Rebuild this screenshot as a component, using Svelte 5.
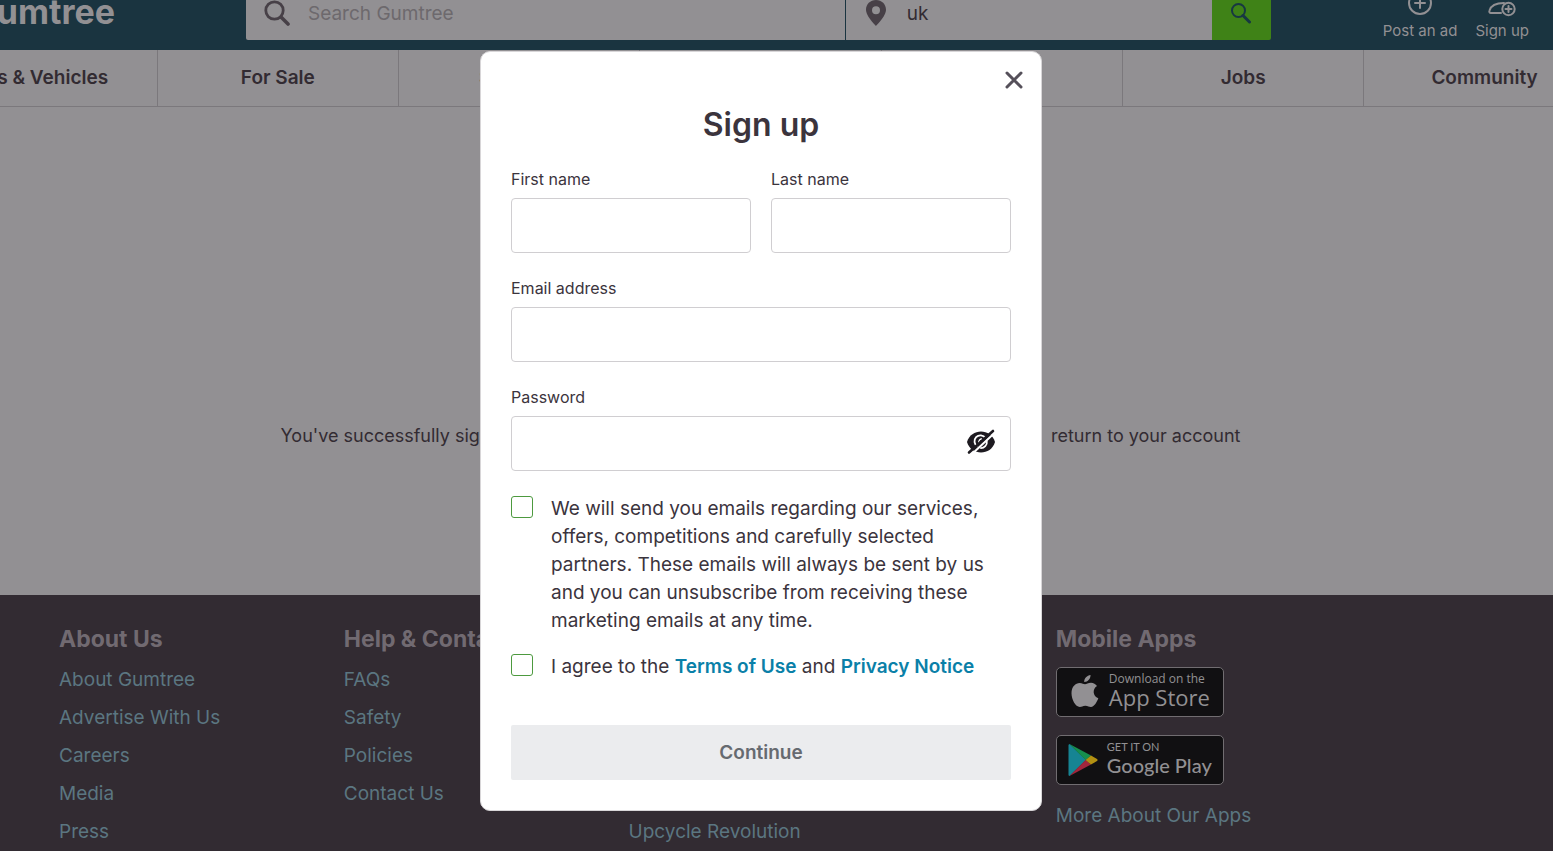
<script lang="ts">
  const categories = ["Cars & Vehicles", "For Sale", "Services", "Property", "Pets", "Jobs", "Community"];

  const footerColumns = [
    {
      title: "About Us",
      links: ["About Gumtree", "Advertise With Us", "Careers", "Media", "Press"],
    },
    {
      title: "Help & Contact",
      links: ["FAQs", "Safety", "Policies", "Contact Us"],
    },
    {
      title: "More From Us",
      links: ["Blog", "Insurance", "Car Guides", "Popular Searches", "Upcycle Revolution"],
    },
  ];

  let keyword = $state("");
  let location = $state("uk");
  let showPassword = $state(false);
  let marketing = $state(false);
  let terms = $state(false);
</script>

<div class="page">
  <header>
    <a class="logo" href="/">gumtree</a>

    <form class="search">
      <label class="field keyword">
        <svg width="26" height="26" viewBox="0 0 26 26" fill="none" stroke="#474047">
          <circle cx="10.5" cy="10.5" r="8.7" stroke-width="2.8" />
          <path d="M17 17l7 7" stroke-width="3.6" stroke-linecap="round" />
        </svg>
        <input type="text" aria-label="Search Gumtree" placeholder="Search Gumtree" bind:value={keyword} />
      </label>
      <label class="field location">
        <svg width="22" height="26" viewBox="0 0 22 26">
          <path
            fill="#474047"
            fill-rule="evenodd"
            d="M11 0C5.200 0 1 4.300 1 9.800 1 16.500 11 26 11 26s10-9.500 10-16.200C21 4.300 16.800 0 11 0zm0 6.200a4 4 0 1 1 0 8 4 4 0 0 1 0-8z"
          />
        </svg>
        <input type="text" aria-label="Location" bind:value={location} />
      </label>
      <button type="button" class="go" aria-label="Search">
        <svg width="22" height="22" viewBox="0 0 22 22" fill="none" stroke="#173742">
          <circle cx="8.500" cy="8.500" r="6.500" stroke-width="2" />
          <path d="M13 13.500l6.500 6.500" stroke-width="3" stroke-linecap="round" />
        </svg>
      </button>
    </form>

    <nav class="account">
      <a href="/post-ad">
        <svg width="28" height="28" viewBox="0 0 28 28" fill="none" stroke="#929093" stroke-width="2" stroke-linecap="round">
          <circle cx="14" cy="11" r="11" />
          <path d="M14 6v10M9 11h10" />
        </svg>
        Post an ad
      </a>
      <a href="/sign-up">
        <svg width="28" height="28" viewBox="0 0 28 28" fill="none" stroke="#929093" stroke-width="2" stroke-linecap="round">
          <circle cx="11" cy="3" r="4" />
          <path d="M13 21H3c-1.500 0-2-1-1.500-2.500C3 13.500 7 11 16 11" />
          <circle cx="20.500" cy="17" r="6.200" />
          <path d="M20.500 14v6M17.500 17h6" />
        </svg>
        Sign up
      </a>
    </nav>
  </header>

  <nav class="categories">
    <ul>
      {#each categories as category}
        <li><a href="/">{category}</a></li>
      {/each}
    </ul>
  </nav>

  <main>
    <p class="message">
      <span>You've successfully signed out. Sign in to</span>
      <span>return to your account</span>
    </p>
  </main>

  <footer>
    {#each footerColumns as column}
      <section>
        <h2>{column.title}</h2>
        <ul>
          {#each column.links as link}
            <li><a href="/">{link}</a></li>
          {/each}
        </ul>
      </section>
    {/each}
    <section>
      <h2>Mobile Apps</h2>
      <a class="badge apple" href="/">
        <svg width="28" height="34" viewBox="0 0 28 34" fill="#929093">
          <path d="M19.500 0c.3 3.600-2.700 7-6.300 7C12.900 3.600 16.200.3 19.500 0z" />
          <path
            d="M14 9.300c1.400 0 3.200-1.500 6-1.500 2.500 0 4.700 1.300 6 3.200-5 3-4.200 10.200 1.300 12.300-1.300 3.500-4 8.700-7.300 8.700-2.200 0-3-1.300-5.700-1.300S10.800 32 8.800 32C4.500 32 .5 24.500.5 18.300.5 11.600 4.600 8 8.600 8c2.500 0 4.200 1.300 5.400 1.300z"
          />
        </svg>
        <span class="badge-text">
          <small>Download on the</small>
          <strong>App Store</strong>
        </span>
      </a>
      <a class="badge google" href="/">
        <svg width="30" height="32" viewBox="0 0 30 32">
          <path fill="#168493" d="M1.500 0Q.5 0 .5 1.500v29q0 1.500 1 1.500L18 16z" />
          <path fill="#168f4e" d="M1.500 0L23 11.500 17.800 16.200z" />
          <path fill="#a3263d" d="M1.500 32L23 20.500 17.800 15.800z" />
          <path fill="#b29012" d="M23 11.400l6 3.600q1.200 1 0 2l-6 3.600-5.400-4.600z" />
        </svg>
        <span class="badge-text">
          <small>GET IT ON</small>
          <strong>Google Play</strong>
        </span>
      </a>
      <a class="more-apps" href="/">More About Our Apps</a>
    </section>
  </footer>
</div>

<div class="overlay">
  <div class="modal" role="dialog" aria-modal="true" aria-labelledby="signup-title">
    <button type="button" class="close" aria-label="Close">
      <svg width="18" height="18" viewBox="0 0 18 18" stroke="#55505a" stroke-width="3" stroke-linecap="round">
        <path d="M2 2l14 14M16 2L2 16" />
      </svg>
    </button>
    <h1 id="signup-title">Sign up</h1>

    <form>
      <div class="names">
        <div class="form-field">
          <label for="first-name">First name</label>
          <input id="first-name" type="text" />
        </div>
        <div class="form-field">
          <label for="last-name">Last name</label>
          <input id="last-name" type="text" />
        </div>
      </div>

      <div class="form-field">
        <label for="email">Email address</label>
        <input id="email" type="email" />
      </div>

      <div class="form-field">
        <label for="password">Password</label>
        <div class="password">
          <input id="password" type={showPassword ? "text" : "password"} />
          <button
            type="button"
            class="toggle"
            aria-label="Show password"
            onclick={() => (showPassword = !showPassword)}
          >
            <svg width="30" height="26" viewBox="0 0 30 26" fill="none">
              <path fill="#1d1a20" d="M1 13C3 6 9 2.500 15 2.500S27 6 29 13c-2 7-8 10.500-14 10.500S3 20 1 13z" />
              <path d="M11.500 17.500a6 6 0 1 1 8-8.500" stroke="#fff" stroke-width="1.800" />
              <path d="M20.800 12a6 6 0 0 1-6.500 7" stroke="#fff" stroke-width="1.800" />
              <path d="M13 14a3 3 0 0 1 3-4" stroke="#fff" stroke-width="1.400" />
              <path d="M5.500 25.500L29.500 3" stroke="#fff" stroke-width="2" />
              <path d="M3 23.500L27 2" stroke="#1d1a20" stroke-width="2.600" stroke-linecap="round" />
            </svg>
          </button>
        </div>
      </div>

      <div class="check">
        <input id="marketing" type="checkbox" bind:checked={marketing} />
        <label for="marketing">
          We will send you emails regarding our services, offers, competitions and carefully selected
          partners. These emails will always be sent by us and you can unsubscribe from receiving these
          marketing emails at any time.
        </label>
      </div>
      <div class="check">
        <input id="terms" type="checkbox" bind:checked={terms} />
        <label for="terms">
          I agree to the <a href="/terms">Terms of Use</a> and <a href="/privacy">Privacy Notice</a>
        </label>
      </div>

      <button type="submit" class="continue" disabled>Continue</button>
    </form>
  </div>
</div>

<style>
  :global(body) {
    overflow: hidden;
    background: #322b32;
  }

  .page,
  .overlay {
    font-family: Inter, "Open Sans", sans-serif;
    font-size: 19px;
    color: #3b343d;
  }

  .page *,
  .overlay * {
    box-sizing: border-box;
  }

  input,
  button {
    font: inherit;
    color: inherit;
  }

  button {
    border: 0;
    padding: 0;
    background: none;
    cursor: pointer;
  }

  a {
    color: inherit;
    text-decoration: none;
  }

  ul {
    list-style: none;
    margin: 0;
    padding: 0;
  }

  svg {
    display: block;
    flex: none;
  }

  .page {
    display: flex;
    flex-direction: column;
    min-height: 100vh;
    background: #929093;
    color: #322b32;
  }

  /* header, partly scrolled out of view */
  header {
    display: flex;
    align-items: flex-start;
    height: 64px;
    margin-top: -14px;
    padding-right: 24px;
    background: #1a3440;
  }

  .logo {
    display: flex;
    flex: none;
    justify-content: flex-end;
    width: 115px;
    margin-right: 131px;
    font-size: 34px;
    font-weight: 700;
    line-height: 52px;
    color: #929093;
  }

  .search {
    display: grid;
    grid-template-columns: 600fr 366fr 59px;
    flex: 1;
    height: 54px;
    margin-right: 112px;
    border-radius: 2px;
    overflow: hidden;
  }

  .field {
    display: flex;
    align-items: center;
    min-width: 0;
    background: #929093;
  }

  .field input {
    flex: 1;
    min-width: 0;
    height: 100%;
    padding: 0;
    border: 0;
    outline: 0;
    background: none;
    font-size: 19px;
  }

  .field input::placeholder {
    color: #6d696d;
    opacity: 1;
  }

  .keyword {
    gap: 18px;
    padding-left: 18px;
    border-right: 1px solid #1a3440;
  }

  .location {
    gap: 20px;
    padding-left: 19px;
  }

  .go {
    display: flex;
    align-items: center;
    justify-content: center;
    background: #3f8217;
  }

  .account {
    display: flex;
    gap: 18px;
    padding-top: 6px;
    font-size: 15px;
    color: #929093;
  }

  .account a {
    display: flex;
    flex-direction: column;
    align-items: center;
    line-height: 22px;
    white-space: nowrap;
  }

  .categories {
    display: flex;
    justify-content: center;
    padding-right: 31px;
    border-bottom: 1px solid #7b787c;
  }

  .categories ul {
    display: grid;
    grid-template-columns: repeat(7, 1fr);
    flex: none;
    width: 111%;
  }

  .categories li {
    border-right: 1px solid #7b787c;
    font-weight: 600;
    line-height: 56px;
    text-align: center;
  }

  main {
    padding: 317px 32px 147px 0;
  }

  .message {
    display: flex;
    justify-content: space-between;
    max-width: 960px;
    margin: 0 auto;
    font-size: 18px;
    line-height: 24px;
    white-space: nowrap;
  }

  footer {
    display: grid;
    grid-template-columns: 2fr 2fr 3fr 3fr;
    flex: 1;
    padding: 28px 70px 0 59px;
    background: #322b32;
    color: #5b7681;
  }

  footer h2 {
    margin: 0 0 6px;
    font-size: 23px;
    line-height: 32px;
    color: #716a71;
  }

  footer li {
    line-height: 38px;
  }

  .badge {
    display: flex;
    align-items: center;
    width: 168px;
    height: 50px;
    margin-bottom: 18px;
    border: 1px solid #716d71;
    border-radius: 5px;
    background: #111012;
    color: #929093;
  }

  h2 + .badge {
    margin-top: 12px;
  }

  .badge-text {
    display: flex;
    flex-direction: column;
    padding-bottom: 4px;
    white-space: nowrap;
  }

  .badge small {
    font-size: 12px;
    line-height: 14px;
  }

  .badge strong {
    font-size: 22px;
    font-weight: 500;
    line-height: 22px;
  }

  .apple {
    gap: 10px;
    padding-left: 14px;
    font-family: "Open Sans", sans-serif;
  }

  .google {
    gap: 9px;
    padding-left: 11px;
    font-family: Lato, sans-serif;
  }

  .google small {
    font-size: 11px;
  }

  .google strong {
    font-size: 20px;
  }

  .more-apps {
    line-height: 26px;
  }

  .overlay {
    position: fixed;
    inset: 0;
    display: flex;
    align-items: flex-start;
    justify-content: center;
    padding: 51px 31px 0 0;
  }

  .modal {
    position: relative;
    width: 562px;
    padding: 53px 30px 30px;
    border: 1px solid #d8d6d8;
    border-radius: 10px;
    background: #fff;
  }

  .close {
    position: absolute;
    top: 19px;
    right: 18px;
  }

  h1 {
    margin: 0 0 23px;
    font-size: 32px;
    font-weight: 600;
    line-height: 40px;
    text-align: center;
  }

  .names {
    display: grid;
    grid-template-columns: 1fr 1fr;
    gap: 20px;
  }

  .form-field {
    margin-bottom: 24px;
  }

  .form-field label {
    display: block;
    margin-bottom: 8px;
    font-size: 16px;
    line-height: 22px;
  }

  .form-field input {
    display: block;
    width: 100%;
    height: 55px;
    padding: 0 16px;
    border: 1px solid #d0ced1;
    border-radius: 4px;
    background: #fff;
  }

  .password {
    position: relative;
  }

  .toggle {
    position: absolute;
    top: 13px;
    right: 15px;
  }

  .check {
    display: flex;
    align-items: flex-start;
    gap: 18px;
    margin-bottom: 18px;
  }

  .check input {
    appearance: none;
    flex: none;
    width: 22px;
    height: 22px;
    margin: 1px 0 0;
    border: 1px solid #4d9a3f;
    border-radius: 3px;
    background: #fff;
  }

  .check input:checked {
    background: #4d9a3f;
  }

  .check label {
    line-height: 28px;
  }

  .check a {
    font-weight: 600;
    color: #0a80a8;
  }

  .continue {
    display: block;
    width: 100%;
    height: 55px;
    margin-top: 44px;
    border-radius: 2px;
    background: #ebecee;
    font-weight: 600;
    color: #666a70;
  }
</style>
